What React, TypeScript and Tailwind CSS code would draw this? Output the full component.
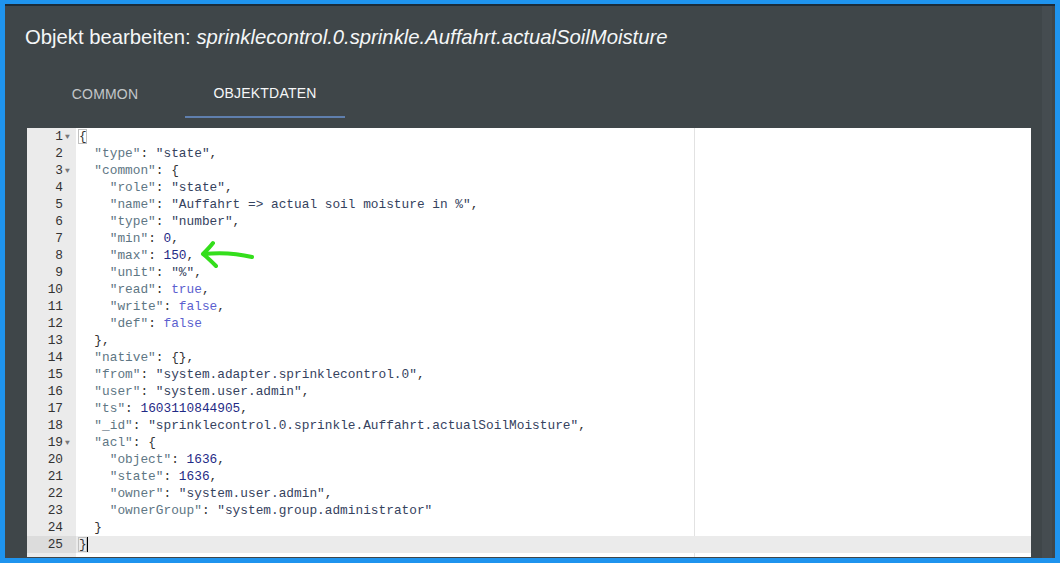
import React from "react";

const LINES: string[] = [
  "{",
  '  "type": "state",',
  '  "common": {',
  '    "role": "state",',
  '    "name": "Auffahrt => actual soil moisture in %",',
  '    "type": "number",',
  '    "min": 0,',
  '    "max": 150,',
  '    "unit": "%",',
  '    "read": true,',
  '    "write": false,',
  '    "def": false',
  "  },",
  '  "native": {},',
  '  "from": "system.adapter.sprinklecontrol.0",',
  '  "user": "system.user.admin",',
  '  "ts": 1603110844905,',
  '  "_id": "sprinklecontrol.0.sprinkle.Auffahrt.actualSoilMoisture",',
  '  "acl": {',
  '    "object": 1636,',
  '    "state": 1636,',
  '    "owner": "system.user.admin",',
  '    "ownerGroup": "system.group.administrator"',
  "  }",
  "}",
];

const FOLD = new Set([1, 3, 19]);

function tokenize(line: string) {
  const out: { t: string; c: string }[] = [];
  const re = /("(?:[^"\\]|\\.)*")(\s*:)?|(-?\d+(?:\.\d+)?)|(true|false|null)|(\s+)|([^\s"]+?)/g;
  let m: RegExpExecArray | null;
  while ((m = re.exec(line))) {
    if (m[1]) {
      if (m[2]) {
        out.push({ t: m[1], c: "text-[#5e7684]" });
        out.push({ t: m[2], c: "text-[#333]" });
      } else out.push({ t: m[1], c: "text-[#35425e]" });
    } else if (m[3]) out.push({ t: m[3], c: "text-[#1f2a86]" });
    else if (m[4]) out.push({ t: m[4], c: "text-[#5b5fcf]" });
    else if (m[5]) out.push({ t: m[5], c: "" });
    else out.push({ t: m[6], c: "text-[#333]" });
  }
  return out;
}

export default function App() {
  return (
    <div className="w-[1060px] h-[563px] bg-[#1f94ee] pt-[4px] pl-[5px] pr-[5px] pb-[5px] overflow-hidden">
      <div className="w-full h-full bg-[#3f4649] border-t-2 border-[#1b2b38] flex flex-col pl-[22px] pr-[24px] relative">
        <div
          className="mt-[18px] ml-[-2px] text-[20.3px] leading-[26px] text-[#f4f6f7]"
          style={{ fontFamily: '"Liberation Sans", Arial, sans-serif' }}
        >
          Objekt bearbeiten: <span className="italic">sprinklecontrol.0.sprinkle.Auffahrt.actualSoilMoisture</span>
        </div>
        <div
          className="flex mt-[20px] ml-[-2px] h-[48px] text-[14px]"
          style={{ fontFamily: '"Liberation Sans", Arial, sans-serif' }}
        >
          <div className="w-[160px] flex items-center justify-center text-[#c3c7c9] tracking-[0.2px]">COMMON</div>
          <div className="w-[160px] flex items-center justify-center text-[#f6f7f8] tracking-[0.2px] border-b-2 border-[#5f7fae]">
            OBJEKTDATEN
          </div>
        </div>
        <div
          className="mt-[10px] flex-1 bg-white flex relative overflow-hidden text-[12.8px] leading-[17px]"
          style={{ fontFamily: '"Liberation Mono", "DejaVu Sans Mono", monospace' }}
        >
          <div className="w-[49px] bg-[#ebebeb] text-[#333] flex flex-col">
            {LINES.map((_, i) => (
              <div
                key={i}
                className={`h-[17px] flex justify-end items-center pr-[4px] ${i === 24 ? "bg-[#dcdcdc]" : ""}`}
              >
                <span>{i + 1}</span>
                <span className="w-[9px] text-[8px] text-[#777] flex justify-center">
                  {FOLD.has(i + 1) ? "▼" : ""}
                </span>
              </div>
            ))}
            <div className="flex-1" />
          </div>
          <div className="flex-1 flex flex-col relative">
            <div className="absolute left-[618px] top-0 bottom-0 w-px bg-[#e2e2e2]" />
            {LINES.map((l, i) => (
              <div
                key={i}
                className={`h-[17px] pl-[3px] whitespace-pre text-[#333] relative ${i === 24 ? "bg-[#ebebeb]" : ""}`}
              >
                {(i === 0 || i === 24) && (
                  <span className="absolute left-[2px] top-[1px] w-[9px] h-[15px] border border-[#c0c0c0]" />
                )}
                {i === 24 && <span className="absolute left-[11px] top-[1px] w-px h-[15px] bg-black" />}
                {tokenize(l).map((tk, j) => (
                  <span key={j} className={tk.c}>
                    {tk.t}
                  </span>
                ))}
              </div>
            ))}
          </div>
          <svg className="absolute left-[168px] top-[110px]" width="64" height="34" viewBox="0 0 64 34">
            <path
              d="M57 19 C45 16 28 14 8 16 M8 16 C12 12 15 9 18 5 M8 16 C13 20 17 24 21 28"
              fill="none"
              stroke="#34de1c"
              strokeWidth="4"
              strokeLinecap="round"
              strokeLinejoin="round"
            />
          </svg>
        </div>
        <div className="h-[1px]" />
        <div className="absolute right-[3px] top-0 bottom-0 w-[10px] bg-[#454c50]" />
      </div>
    </div>
  );
}
